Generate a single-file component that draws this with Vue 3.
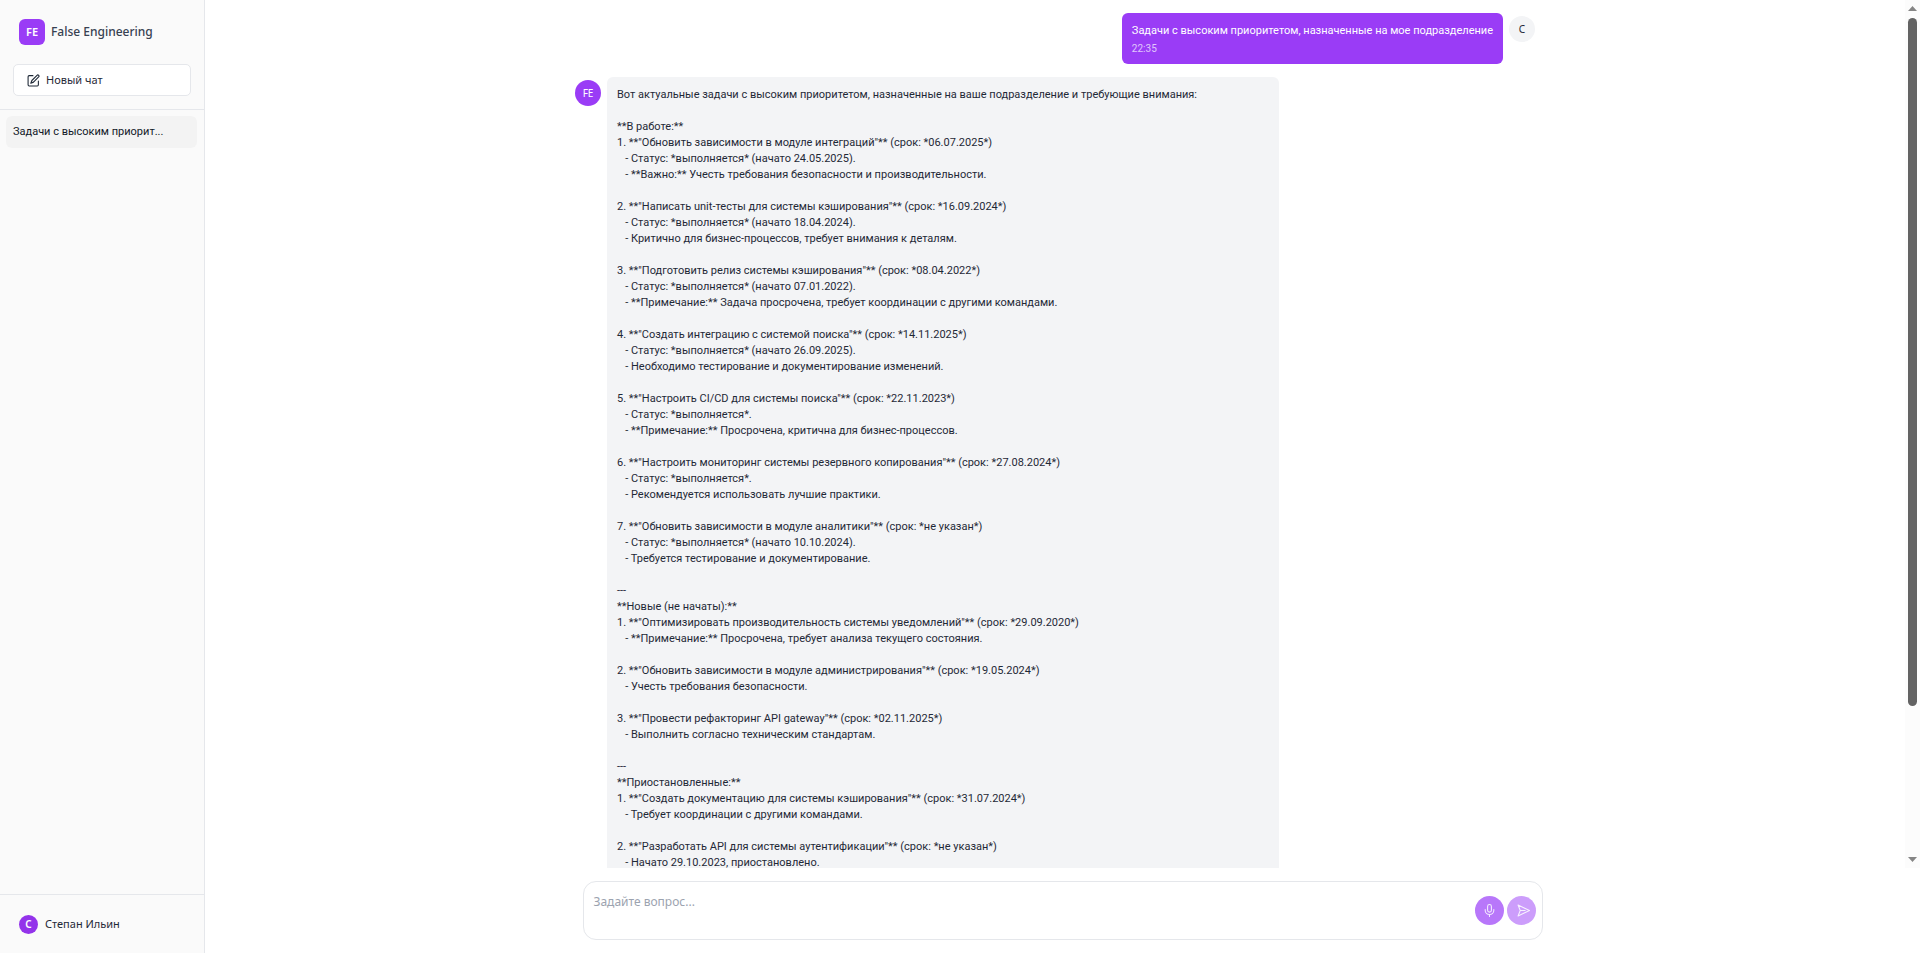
<script setup>
import { ref } from 'vue'

const draft = ref('')
const chats = ['Задачи с высоким приоритетом, назначенные на мое подразделение']
const question = 'Задачи с высоким приоритетом, назначенные на мое подразделение'
const answer = `Вот актуальные задачи с высоким приоритетом, назначенные на ваше подразделение и требующие внимания:

**В работе:**
1. **"Обновить зависимости в модуле интеграций"** (срок: *06.07.2025*)
   - Статус: *выполняется* (начато 24.05.2025).
   - **Важно:** Учесть требования безопасности и производительности.

2. **"Написать unit-тесты для системы кэширования"** (срок: *16.09.2024*)
   - Статус: *выполняется* (начато 18.04.2024).
   - Критично для бизнес-процессов, требует внимания к деталям.

3. **"Подготовить релиз системы кэширования"** (срок: *08.04.2022*)
   - Статус: *выполняется* (начато 07.01.2022).
   - **Примечание:** Задача просрочена, требует координации с другими командами.

4. **"Создать интеграцию с системой поиска"** (срок: *14.11.2025*)
   - Статус: *выполняется* (начато 26.09.2025).
   - Необходимо тестирование и документирование изменений.

5. **"Настроить CI/CD для системы поиска"** (срок: *22.11.2023*)
   - Статус: *выполняется*.
   - **Примечание:** Просрочена, критична для бизнес-процессов.

6. **"Настроить мониторинг системы резервного копирования"** (срок: *27.08.2024*)
   - Статус: *выполняется*.
   - Рекомендуется использовать лучшие практики.

7. **"Обновить зависимости в модуле аналитики"** (срок: *не указан*)
   - Статус: *выполняется* (начато 10.10.2024).
   - Требуется тестирование и документирование.

---
**Новые (не начаты):**
1. **"Оптимизировать производительность системы уведомлений"** (срок: *29.09.2020*)
   - **Примечание:** Просрочена, требует анализа текущего состояния.

2. **"Обновить зависимости в модуле администрирования"** (срок: *19.05.2024*)
   - Учесть требования безопасности.

3. **"Провести рефакторинг API gateway"** (срок: *02.11.2025*)
   - Выполнить согласно техническим стандартам.

---
**Приостановленные:**
1. **"Создать документацию для системы кэширования"** (срок: *31.07.2024*)
   - Требует координации с другими командами.

2. **"Разработать API для системы аутентификации"** (срок: *не указан*)
   - Начато 29.10.2023, приостановлено.`
</script>

<template>
  <div class="app">
    <aside class="sidebar">
      <header class="side-head">
        <div class="brand">
          <span class="logo">FE</span>
          <span class="brand-name">False Engineering</span>
        </div>
        <button class="new-chat" type="button">
          <svg viewBox="0 0 24 24" width="13" height="13" fill="none" stroke="currentColor" stroke-width="2" stroke-linecap="round" stroke-linejoin="round">
            <path d="M11 3H4a2 2 0 0 0-2 2v15a2 2 0 0 0 2 2h15a2 2 0 0 0 2-2v-7" />
            <path d="M18.5 2.5a2.12 2.12 0 0 1 3 3L12 15l-5 2 2-5z" />
          </svg>
          Новый чат
        </button>
      </header>
      <nav class="chats">
        <a v-for="chat in chats" :key="chat" class="chat" href="#">{{ chat.slice(0, 24) }}...</a>
      </nav>
      <footer class="user">
        <span class="user-avatar">С</span>
        <span>Степан Ильин</span>
      </footer>
    </aside>

    <main class="main">
      <div class="viewport">
        <section class="messages">
          <div class="thread">
            <article class="row own">
              <div class="bubble purple">
                <p class="text">{{ question }}</p>
                <time class="time">22:35</time>
              </div>
              <span class="avatar grey">С</span>
            </article>
            <article class="row">
              <span class="avatar bot">FE</span>
              <div class="bubble light"><p class="text">{{ answer }}</p></div>
            </article>
          </div>
        </section>
        <div class="scrollbar" aria-hidden="true">
          <svg width="9" height="5" viewBox="0 0 9 5"><path d="M4.500 0L9 5H0z" fill="#858585" /></svg>
          <div class="track"><div class="thumb"></div></div>
          <svg width="9" height="5" viewBox="0 0 9 5"><path d="M0 0H9L4.500 5z" fill="#858585" /></svg>
        </div>
      </div>

      <form class="composer" @submit.prevent>
        <textarea v-model="draft" class="input" aria-label="Задайте вопрос" placeholder="Задайте вопрос..."></textarea>
        <button class="round mic" type="button" aria-label="Голосовой ввод">
          <svg viewBox="0 0 24 24" width="13" height="13" fill="none" stroke="currentColor" stroke-width="2" stroke-linecap="round" stroke-linejoin="round">
            <rect x="8.500" y="1" width="7" height="14" rx="3.500" />
            <path d="M4 10v1.500a8 8 0 0 0 16 0V10M12 19.500V23" />
          </svg>
        </button>
        <button class="round send" type="submit" aria-label="Отправить">
          <svg viewBox="0 0 24 24" width="13" height="13" fill="none" stroke="currentColor" stroke-width="2" stroke-linecap="round" stroke-linejoin="round">
            <path d="M6 12L2 2l21 10L2 22zM6 12h9" />
          </svg>
        </button>
      </form>
    </main>
  </div>
</template>

<style>
body {
  margin: 0;
}
</style>

<style scoped>
.app {
  display: flex;
  height: 100vh;
  overflow: hidden;
  background: #fff;
  color: #1f2937;
  font: 11px/16px "Noto Sans", "Open Sans", sans-serif;
}
.app * {
  box-sizing: border-box;
}
button,
textarea {
  font: inherit;
  color: inherit;
}
.sidebar {
  display: flex;
  flex-direction: column;
  flex: none;
  width: 205px;
  border-right: 1px solid #e5e7eb;
  background: #fafafa;
}
.side-head {
  padding: 13px;
  border-bottom: 1px solid #e5e7eb;
}
.brand {
  display: flex;
  align-items: center;
  gap: 6px;
  padding: 6px;
  margin-bottom: 13px;
}
.logo {
  display: grid;
  place-items: center;
  width: 26px;
  height: 26px;
  border-radius: 6px;
  background: #9a3cf6;
  color: #fff;
  font-weight: 600;
}
.brand-name {
  color: #374151;
  font-size: 12px;
  font-weight: 500;
}
.new-chat {
  display: flex;
  align-items: center;
  gap: 6px;
  width: 100%;
  height: 32px;
  padding: 0 13px;
  border: 1px solid #e5e7eb;
  border-radius: 5px;
  background: #fff;
}
.chats {
  flex: 1;
  padding: 6px 7px 6px 6px;
}
.chat {
  display: block;
  padding: 8px 7px;
  border-radius: 6px;
  background: #f3f3f3;
  color: #111827;
  font-family: Roboto, "Noto Sans", sans-serif;
  text-decoration: none;
  white-space: nowrap;
}
.user {
  display: flex;
  align-items: center;
  gap: 7px;
  height: 59px;
  padding: 0 19px;
  border-top: 1px solid #e5e7eb;
}
.user-avatar {
  display: grid;
  place-items: center;
  width: 19px;
  height: 19px;
  border-radius: 50%;
  background: #9333ea;
  color: #fff;
  font-size: 10px;
  font-weight: 600;
}
.main {
  display: flex;
  flex: 1;
  flex-direction: column;
  min-width: 0;
}
.viewport {
  display: flex;
  flex: 1;
  min-height: 0;
}
.messages {
  flex: 1;
  padding: 13px;
  overflow-y: auto;
  scrollbar-width: none;
}
.thread {
  display: flex;
  flex-direction: column;
  gap: 13px;
  max-width: 960px;
  margin: 0 auto;
}
.row {
  display: flex;
  align-items: flex-start;
  gap: 6px;
}
.own {
  justify-content: flex-end;
}
.avatar {
  display: grid;
  place-items: center;
  flex: none;
  width: 26px;
  height: 26px;
  margin-top: 3px;
  border-radius: 50%;
  font-size: 10px;
}
.grey {
  background: #f3f4f6;
}
.bot {
  background: #9a3cf6;
  color: #fff;
}
.bubble {
  padding: 10px 10px 8px;
  border-radius: 6px;
  font-family: Roboto, "Noto Sans", sans-serif;
}
.purple {
  background: #9a3cf6;
  color: #fff;
}
.light {
  width: 70%;
  background: #f3f4f6;
}
.text {
  margin: 0;
  white-space: pre-wrap;
}
.time {
  display: block;
  margin-top: 3px;
  font-size: 10px;
  line-height: 14px;
  opacity: 0.7;
}
.scrollbar {
  display: flex;
  flex-direction: column;
  align-items: center;
  gap: 7px;
  width: 15px;
  padding: 6px 0;
  background: #fcfcfc;
}
.track {
  flex: 1;
}
.thumb {
  width: 9px;
  height: 82.7%;
  border-radius: 5px;
  background: #636363;
}
.composer {
  display: flex;
  align-items: center;
  gap: 3px;
  width: calc(100% - 26px);
  max-width: 960px;
  height: 59px;
  margin: 13px auto;
  padding: 0 6px 0 0;
  border: 1px solid #e5e7eb;
  border-radius: 13px;
}
.input {
  flex: 1;
  align-self: stretch;
  padding: 10px;
  border: 0;
  outline: 0;
  resize: none;
  background: transparent;
  font-size: 12px;
  line-height: 19px;
}
.input::placeholder {
  color: #9ca3af;
}
.round {
  display: grid;
  place-items: center;
  flex: none;
  width: 29px;
  height: 29px;
  padding: 0;
  border: 0;
  border-radius: 50%;
  color: #fff;
}
.round svg {
  opacity: 0.85;
}
.mic {
  background: #b877fa;
}
.send {
  padding-left: 4px;
  background: #cc9dfb;
}
</style>
